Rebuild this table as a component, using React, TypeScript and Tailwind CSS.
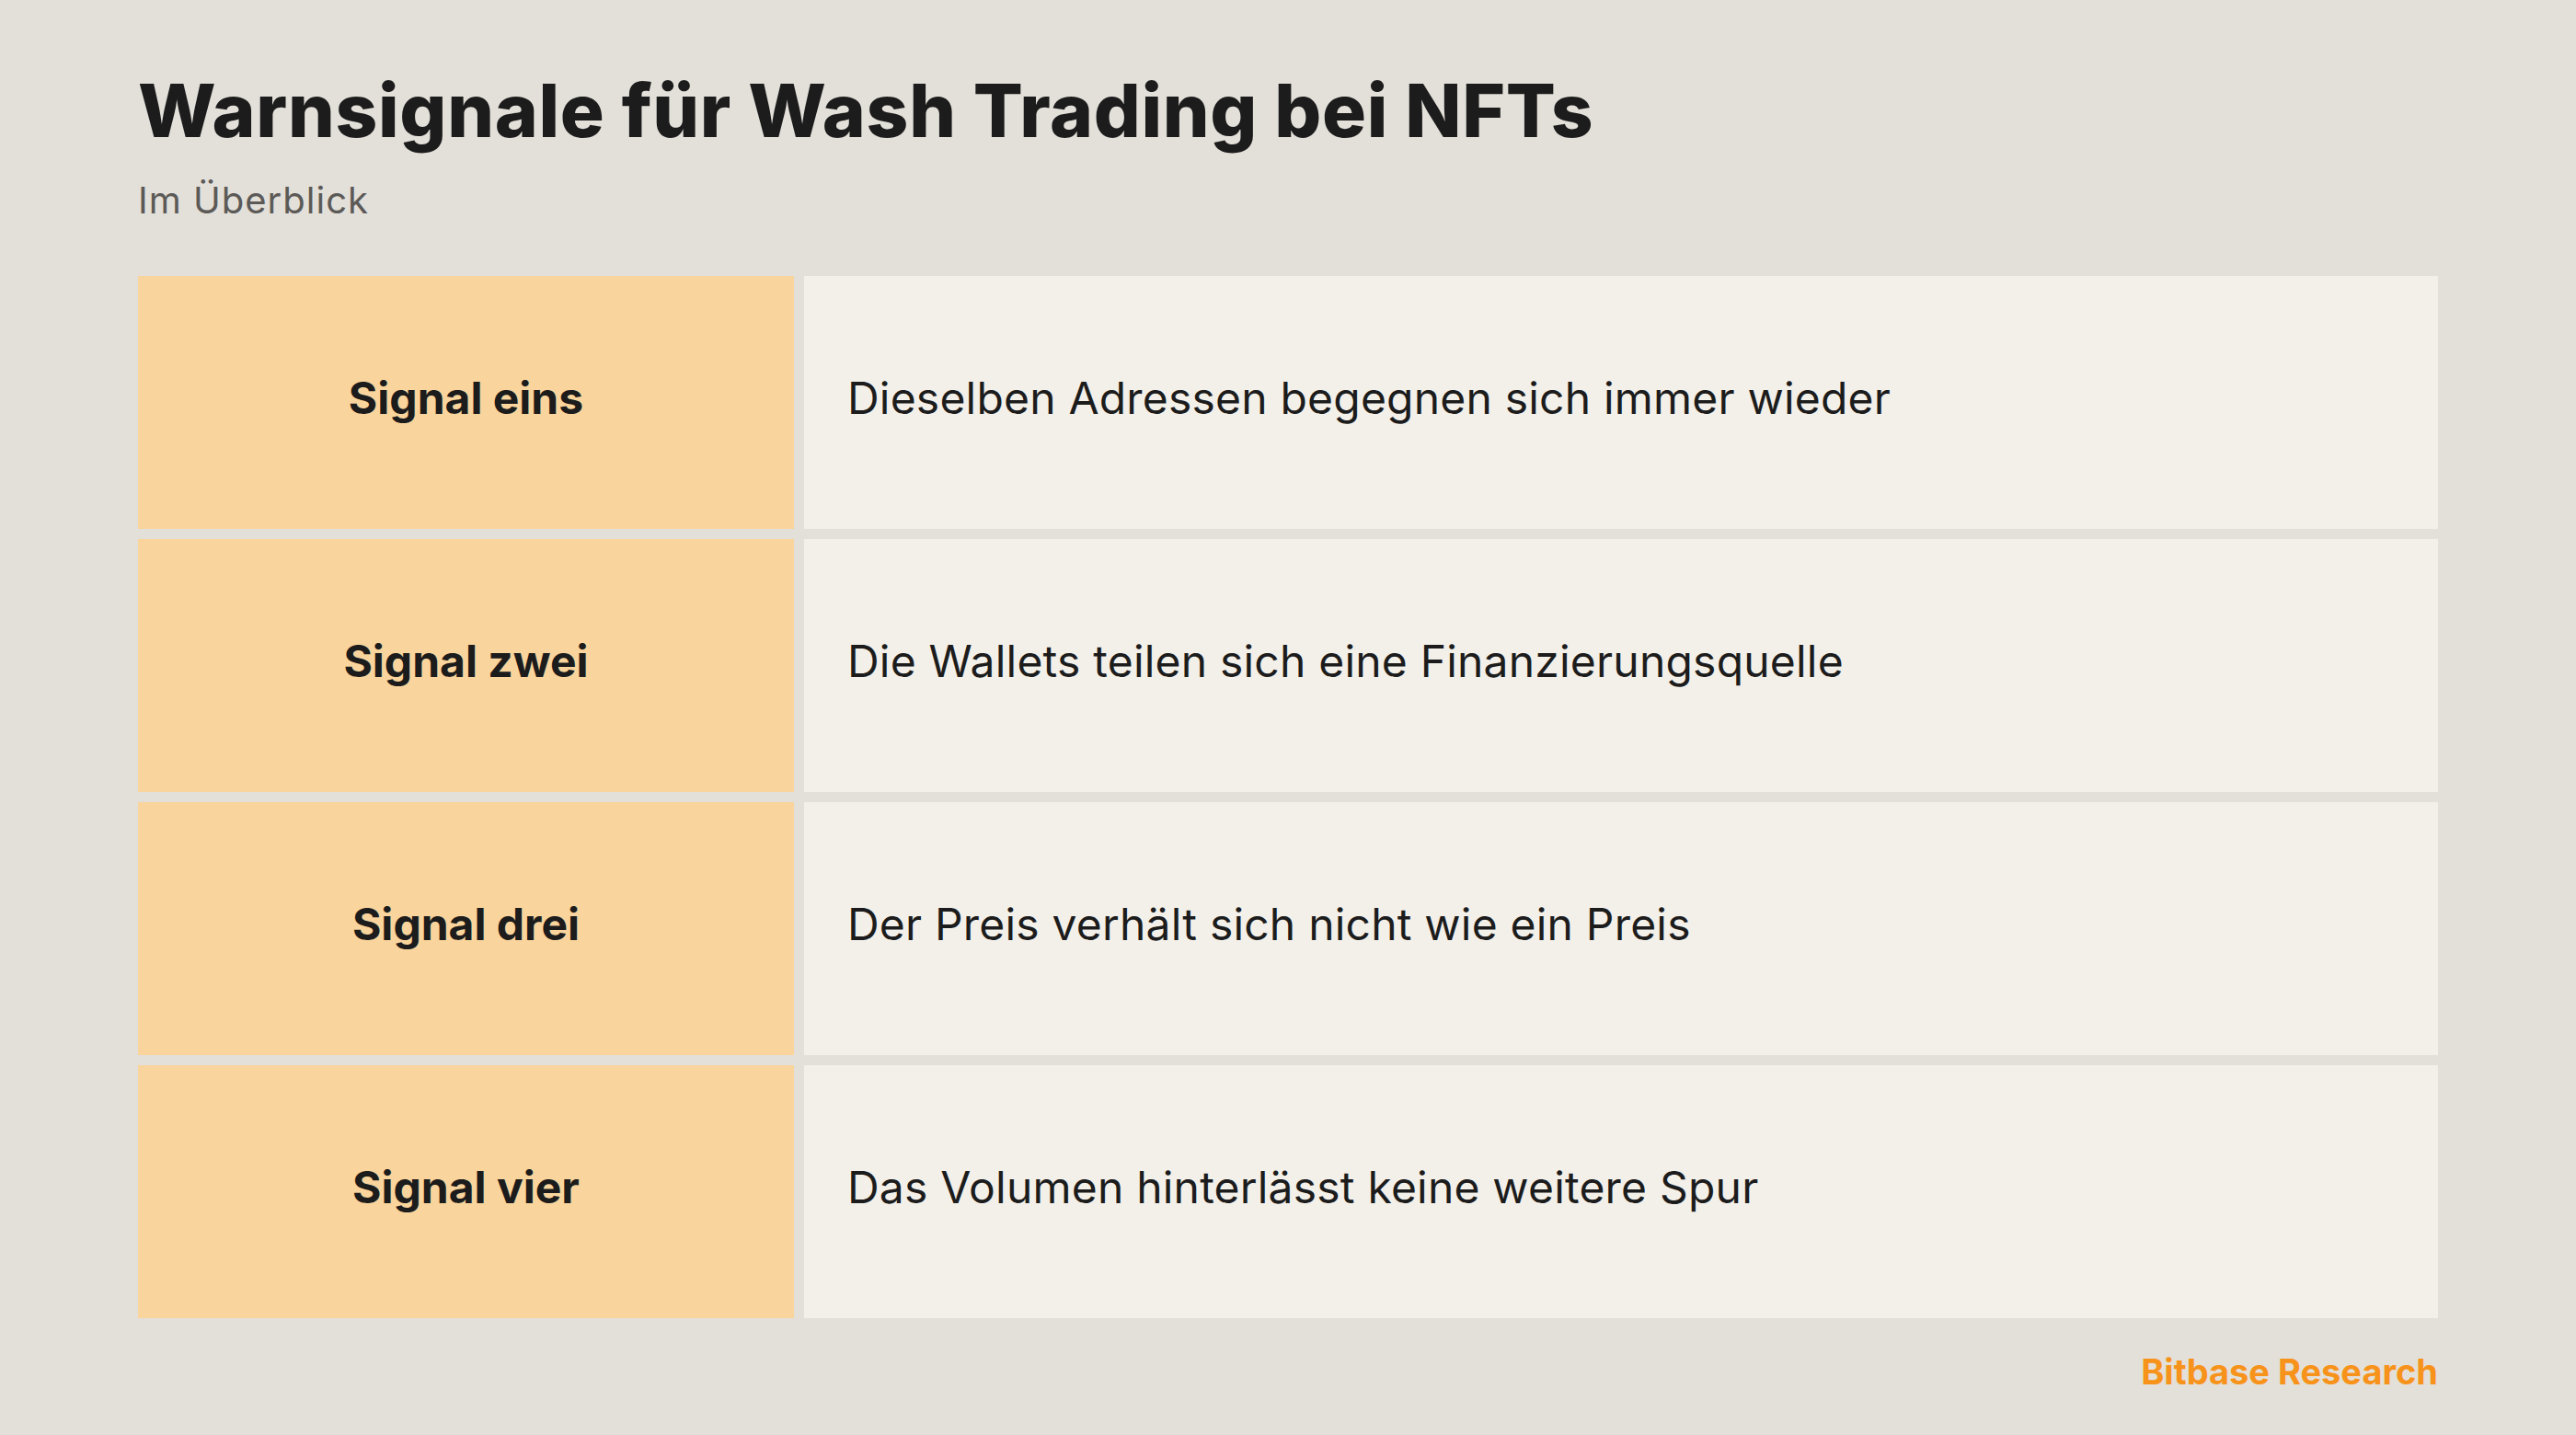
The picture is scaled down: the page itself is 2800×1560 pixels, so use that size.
import React from 'react';

const signals = [
  { label: 'Signal eins', text: 'Dieselben Adressen begegnen sich immer wieder' },
  { label: 'Signal zwei', text: 'Die Wallets teilen sich eine Finanzierungsquelle' },
  { label: 'Signal drei', text: 'Der Preis verhält sich nicht wie ein Preis' },
  { label: 'Signal vier', text: 'Das Volumen hinterlässt keine weitere Spur' },
];

const App: React.FC = () => {
  return (
    <div className="w-[2800px] h-[1560px] bg-[#e3dfd9] px-[150px] pt-[80px] text-[#1c1c1c] font-['Inter',sans-serif] flex flex-col">
      {/* Header */}
      <h1 className="text-[80px] leading-none font-extrabold tracking-[0.7px]">Warnsignale für Wash Trading bei NFTs</h1>
      <p className="mt-[38px] text-[40px] leading-none tracking-[1px] text-[#5c5a57]">Im Überblick</p>

      {/* Table */}
      <div className="mt-[62px] flex flex-col gap-[11px]">
        {signals.map((s) => (
          <div key={s.label} className="flex gap-[11px] h-[275px]">
            <div className="w-[713px] shrink-0 bg-[#f9d49c] flex items-center justify-center pb-[10px]">
              <span className="text-[48px] font-bold">{s.label}</span>
            </div>
            <div className="flex-1 bg-[#f3f0ea] flex items-center pl-[47px] pb-[10px]">
              <span className="text-[48px] tracking-[0.2px]">{s.text}</span>
            </div>
          </div>
        ))}
      </div>

      {/* Footer */}
      <div className="mt-[30px] flex justify-end">
        <span className="text-[38px] font-bold text-[#f7931a]">Bitbase Research</span>
      </div>
    </div>
  );
};

export default App;
